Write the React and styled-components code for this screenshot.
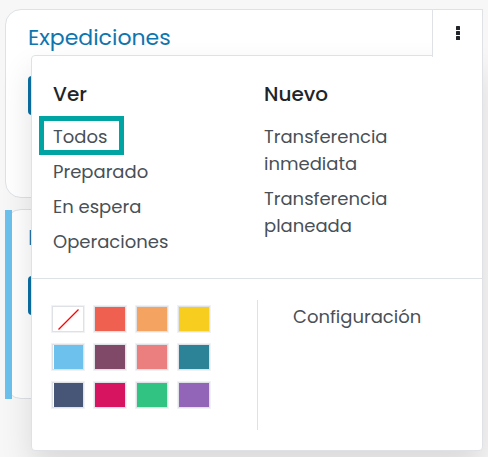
import React from "react";
import styled, { createGlobalStyle } from "styled-components";

const GlobalStyle = createGlobalStyle`
  *, *::before, *::after { box-sizing: border-box; }
  body {
    margin: 0;
    background: #f7f7f7;
    color: #495057;
    font-family: Poppins, Inter, "Open Sans", sans-serif;
    font-size: 18px;
    font-weight: 400;
    line-height: 27px;
  }
`;

const Board = styled.main`
  display: flex;
  flex-direction: column;
  gap: 11px;
  min-height: 100vh;
  padding: 9px 5px;
`;

const Card = styled.article`
  position: relative;
  min-height: ${(p) => (p.$accent ? "190px" : "189px")};
  padding: 14px 22px;
  background: #fff;
  border: 1px solid #dee2e6;
  border-radius: 16px 0 16px 16px;
  ${(p) =>
    p.$accent &&
    `
    &::before {
      content: "";
      position: absolute;
      inset: 0 auto -1px -1px;
      width: 7px;
      background: ${p.$accent};
    }
  `}
`;

const CardTitle = styled.h2`
  margin: 0 0 24px;
  color: #0f75ae;
  font-size: 22px;
  font-weight: 400;
  line-height: 28px;
`;

const ActionButton = styled.button`
  display: block;
  width: 120px;
  height: 39px;
  border: 0;
  border-radius: 4px;
  background: #0b70a5;
`;

const MenuToggle = styled.button`
  position: absolute;
  z-index: 2;
  top: -1px;
  right: -1px;
  display: flex;
  justify-content: center;
  width: 51px;
  height: 48px;
  padding: 16px 0 0;
  background: #fff;
  border: 1px solid #dee2e6;
  border-bottom: 0;
`;

const Menu = styled.div`
  position: absolute;
  z-index: 1;
  top: 45px;
  right: -1px;
  left: 25px;
  background: #fff;
  border: 1px solid #dee2e6;
  border-radius: 4px;
  border-top-right-radius: 0;
  box-shadow: 0 16px 32px rgba(0, 0, 0, 0.12);
`;

const Sections = styled.div`
  display: grid;
  grid-template-columns: 211px 1fr;
  padding: 24px 21px 23px;
  border-bottom: 1px solid #dee2e6;
`;

const SectionTitle = styled.h3`
  margin: 0 0 15px;
  color: #212529;
  font-size: 20px;
  font-weight: 500;
  line-height: 28px;
`;

const LinkList = styled.ul`
  display: flex;
  flex-direction: column;
  gap: 8px;
  margin: 0;
  padding: 0;
  list-style: none;
`;

const MenuLink = styled.a`
  position: relative;
  display: inline-block;
  max-width: 160px;
  color: inherit;
  text-decoration: none;
  vertical-align: top;
  ${(p) =>
    p.$highlighted &&
    `
    &::after {
      content: "";
      position: absolute;
      inset: -7px -17px -5px -14px;
      border: 5px solid #00a5a3;
    }
  `}
`;

const Settings = styled.div`
  display: grid;
  grid-template-columns: 205px 1fr;
  padding: 21px 20px 20px;
`;

const Palette = styled.div`
  display: grid;
  grid-template-columns: repeat(4, 32px);
  grid-auto-rows: 26px;
  align-content: start;
  gap: 12px 10px;
  padding-top: 6px;
`;

const Swatch = styled.button`
  padding: 0;
  border: 1px solid #dee2e6;
  background: ${(p) => p.$color};
  box-shadow: 0 0 0 1px #f1f2f4${(p) => (p.$edge ? ", inset 1px 0 0 #fff" : "")};

  svg {
    display: block;
    width: 100%;
    height: 100%;
  }
`;

const SettingsLinks = styled.div`
  min-height: 130px;
  padding: 3px 0 0 35px;
  border-left: 1px solid #dee2e6;
`;

const VIEWS = ["Todos", "Preparado", "En espera", "Operaciones"];
const CREATE = ["Transferencia inmediata", "Transferencia planeada"];
const COLORS = [
  ["Sin color", "#fff"],
  ["Rojo", "#f06050"],
  ["Naranja", "#f4a460"],
  ["Amarillo", "#f7cd1f"],
  ["Azul claro", "#6cc1ed"],
  ["Morado oscuro", "#814968"],
  ["Rosa salmón", "#eb7e7f"],
  ["Azul medio", "#2c8397"],
  ["Azul oscuro", "#475577"],
  ["Fucsia", "#d6145f"],
  ["Verde", "#30c381"],
  ["Violeta", "#9365b8"],
];

function DotsIcon() {
  return (
    <svg width="4" height="14" viewBox="0 0 4 14" fill="#212529" aria-hidden="true">
      <rect width="4" height="4" rx="0.5" />
      <rect y="5" width="4" height="4" rx="0.5" />
      <rect y="10" width="4" height="4" rx="0.5" />
    </svg>
  );
}

function LinkSection({ title, items, highlighted }) {
  return (
    <section>
      <SectionTitle>{title}</SectionTitle>
      <LinkList>
        {items.map((item) => (
          <li key={item}>
            <MenuLink href="#" $highlighted={item === highlighted}>
              {item}
            </MenuLink>
          </li>
        ))}
      </LinkList>
    </section>
  );
}

export default function App() {
  return (
    <>
      <GlobalStyle />
      <Board>
        <Card>
          <CardTitle>Expediciones</CardTitle>
          <ActionButton aria-label="Procesar" />
          <MenuToggle aria-label="Menú" aria-expanded="true">
            <DotsIcon />
          </MenuToggle>
          <Menu>
            <Sections>
              <LinkSection title="Ver" items={VIEWS} highlighted="Todos" />
              <LinkSection title="Nuevo" items={CREATE} />
            </Sections>
            <Settings>
              <Palette>
                {COLORS.map(([name, color], i) => (
                  <Swatch
                    key={name}
                    type="button"
                    aria-label={name}
                    $color={color}
                    $edge={i > 0 && i % 4 === 0}
                  >
                    {i === 0 && (
                      <svg viewBox="0 0 30 24" aria-hidden="true">
                        <path d="M5.5 22.5L25.5 2.5" stroke="#f00" strokeWidth="1.2" />
                      </svg>
                    )}
                  </Swatch>
                ))}
              </Palette>
              <SettingsLinks>
                <MenuLink href="#">Configuración</MenuLink>
              </SettingsLinks>
            </Settings>
          </Menu>
        </Card>
        <Card $accent="#6cc1ed">
          <CardTitle>E</CardTitle>
          <ActionButton aria-label="Procesar" />
        </Card>
      </Board>
    </>
  );
}
